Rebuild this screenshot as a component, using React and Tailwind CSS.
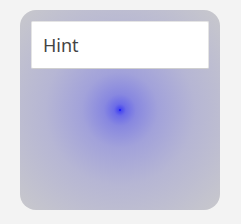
import React from "react";

function App() {
  return (
    <div className="w-[241px] h-[224px] bg-[#f3f3f3] pt-[10px] pl-[20px]">
      <div className="w-[200px] h-[200px] rounded-[16px] p-[11px] bg-[radial-gradient(circle_at_center,#0000ff_0px,#4848f0_1.5px,#6c6ce8_6px,#8888e0_16px,#a2a2da_38px,#b6b6d4_75px,#c8c8cc_141px)]">
        <div className="h-[48px] bg-white border border-[#e4e4e4] border-b-[#cfcfcf] rounded-[2px] flex items-center pl-[11px]">
          <span className="text-[18px] text-[#444444]" style={{ fontFamily: '"Noto Sans", sans-serif' }}>Hint</span>
        </div>
      </div>
    </div>
  );
}

export default App;
